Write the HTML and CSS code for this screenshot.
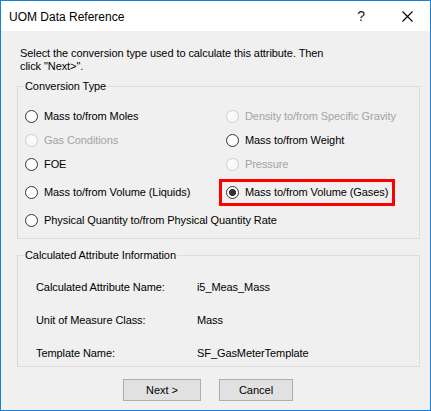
FILE: index.html
```html
<!DOCTYPE html>
<html>
<head>
<meta charset="utf-8">
<link rel="stylesheet" href="styles.css">
</head>
<body>
<div class="window">
  <div class="titlebar">
    <span class="title">UOM Data Reference</span>
    <span class="caption-btn help">?</span>
    <span class="caption-btn close">
      <svg width="11" height="11" viewBox="0 0 11 11"><path d="M0.5 0.5 L10.5 10.5 M10.5 0.5 L0.5 10.5" stroke="#000" stroke-width="1.1" fill="none"/></svg>
    </span>
  </div>
  <div class="content">
    <p class="intro">Select the conversion type used to calculate this attribute. Then<br>click "Next&gt;".</p>
    <fieldset class="group conv">
      <legend>Conversion Type</legend>
      <div class="radios">
        <label class="opt"><span class="radio"></span>Mass to/from Moles</label>
        <label class="opt disabled"><span class="radio"></span>Density to/from Specific Gravity</label>
        <label class="opt disabled"><span class="radio"></span>Gas Conditions</label>
        <label class="opt"><span class="radio"></span>Mass to/from Weight</label>
        <label class="opt"><span class="radio"></span>FOE</label>
        <label class="opt disabled"><span class="radio"></span>Pressure</label>
        <label class="opt"><span class="radio"></span>Mass to/from Volume (Liquids)</label>
        <label class="opt highlight"><span class="radio checked"></span>Mass to/from Volume (Gases)</label>
        <label class="opt wide"><span class="radio"></span>Physical Quantity to/from Physical Quantity Rate</label>
      </div>
    </fieldset>
    <fieldset class="group info">
      <legend>Calculated Attribute Information</legend>
      <div class="info-grid">
        <span>Calculated Attribute Name:</span><span>i5_Meas_Mass</span>
        <span>Unit of Measure Class:</span><span>Mass</span>
        <span>Template Name:</span><span>SF_GasMeterTemplate</span>
      </div>
    </fieldset>
    <div class="buttons">
      <button class="btn next">Next &gt;</button>
      <button class="btn cancel">Cancel</button>
    </div>
  </div>
</div>
</body>
</html>
```
FILE: styles.css
```css
html, body {
  margin: 0;
  padding: 0;
  background: #ffffff;
}
.window {
  box-sizing: border-box;
  width: 431px;
  height: 411px;
  border: 1px solid #1a7fd6;
  display: flex;
  flex-direction: column;
  font-family: "Liberation Sans", Arial, sans-serif;
  font-size: 11px;
  line-height: 13px;
  letter-spacing: -0.08px;
  color: #000;
}
.titlebar {
  height: 30px;
  background: #ffffff;
  display: flex;
  align-items: center;
}
.title {
  flex: 1;
  padding-left: 8px;
  font-size: 12px;
  line-height: 16px;
  padding-top: 1px;
  letter-spacing: 0;
}
.caption-btn {
  width: 46px;
  height: 30px;
  display: flex;
  align-items: center;
  justify-content: center;
}
.help {
  font-size: 14px;
  color: #222;
}
.close svg {
  display: block;
}
.content {
  flex: 1;
  background: #f0f0f0;
  padding: 16px 10px 0 16px;
}
.intro {
  margin: 0;
  padding-left: 3px;
}
.group {
  margin: 7px 0 0 0;
  padding: 0;
  border: 1px solid #dcdcdc;
  min-width: 0;
}
.group legend {
  padding: 0 1px;
  margin-left: 6px;
  line-height: 13px;
}
.radios {
  display: grid;
  grid-template-columns: 201px 1fr;
  grid-template-rows: 24px 24px 24px 32px 24px;
  padding: 11px 0 6px 7px;
  align-items: center;
}
.opt {
  justify-self: start;
  display: flex;
  align-items: center;
  gap: 6px;
  white-space: nowrap;
}
.opt.wide {
  grid-column: 1 / -1;
}
.radio {
  box-sizing: border-box;
  width: 13px;
  height: 13px;
  border: 1px solid #333333;
  border-radius: 50%;
  background: #ffffff;
  flex: none;
}
.radio.checked {
  background: radial-gradient(circle, #333333 0, #333333 3.3px, #ffffff 3.8px);
}
.opt.disabled {
  color: #a3a3a3;
}
.opt.disabled .radio {
  border-color: #cccccc;
  background: #fafafa;
}
.opt.highlight {
  padding: 1px;
  margin-left: -1px;
  outline: 3px solid #ff0000;
  outline-offset: 3px;
}
.info {
  margin-top: 10px;
}
.info-grid {
  display: grid;
  grid-template-columns: 161px 1fr;
  row-gap: 20px;
  padding: 19px 0 6px 18px;
}
.buttons {
  display: flex;
  gap: 18px;
  padding-left: 106px;
  margin-top: 12px;
}
.btn {
  box-sizing: border-box;
  height: 22px;
  padding: 0;
  background: #e1e1e1;
  border: 1px solid #adadad;
  border-radius: 0;
  font-family: "Liberation Sans", Arial, sans-serif;
  font-size: 11px;
  color: #000;
}
.next {
  width: 78px;
}
.cancel {
  width: 74px;
}
```
